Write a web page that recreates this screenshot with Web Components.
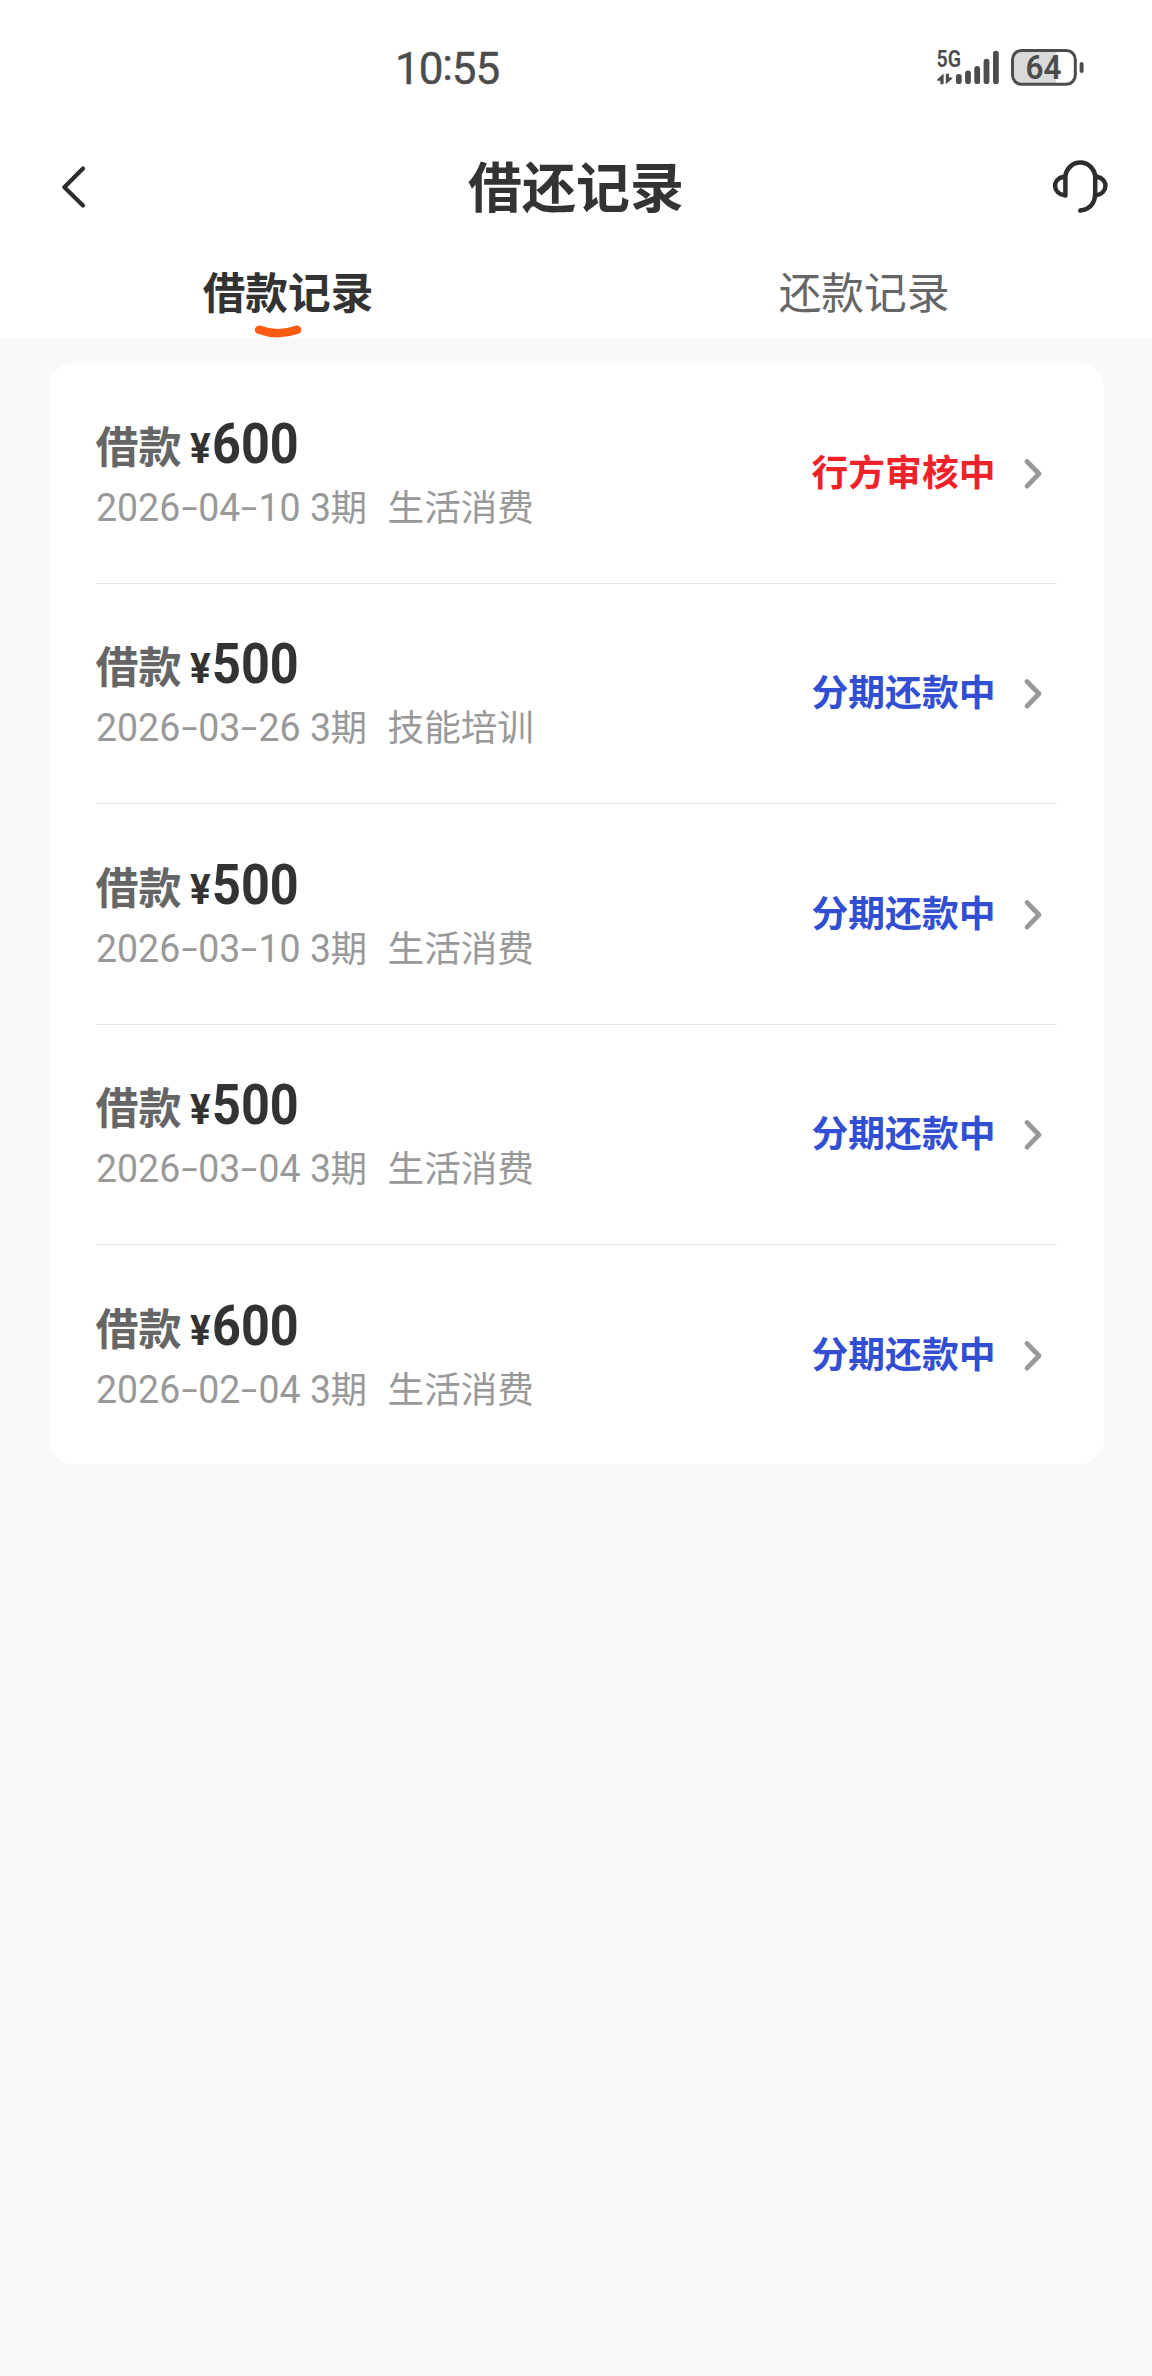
<!DOCTYPE html>
<html lang="zh-CN">
<head>
<meta charset="utf-8">
<title>借还记录</title>
<style>
html,body{margin:0;padding:0}
body{background:#f9f9f9;min-height:2376px;font-family:Roboto,"Noto Sans CJK SC",sans-serif;color:#333}
</style>
</head>
<body>
<loan-page></loan-page>
<script>
function define(name, html) {
  customElements.define(name, class extends HTMLElement {
    constructor() {
      super();
      this.attachShadow({ mode: 'open' }).innerHTML = html;
    }
  });
}

define('status-bar', `
<style>
:host{display:flex;height:130px;box-sizing:border-box;padding:0 66px 0 395px;justify-content:space-between;align-items:flex-start;color:#4c4c4c}
.time{font:400 44px/52px Roboto,sans-serif;padding-top:43px;-webkit-text-stroke:.4px #4c4c4c;letter-spacing:-1.1px}
.time span{vertical-align:4px;line-height:1px}
svg{display:block;margin-top:44px}
text{font-family:Roboto,sans-serif;fill:#4c4c4c}
</style>
<div class="time">10<span>:</span>55</div>
<svg width="151" height="46" viewBox="935 44 151 46">
  <text x="936.5" y="67.3" font-size="23" font-weight="600" textLength="24.5" lengthAdjust="spacingAndGlyphs">5G</text>
  <path d="M943.6 84.3V73.6L937.2 79.6V80.8H940.4V84.3ZM945.8 73.8V84.3L952.4 78.4V77.4H949V73.8Z" fill="#4c4c4c"/>
  <g stroke="#4c4c4c" stroke-width="5.8" stroke-linecap="round"><path d="M958.8 77V81.2M968 73.5V81.2M977.2 69V81.2M986.5 61.7V81.2M995.9 53.6V81.2"/></g>
  <path d="M1020 51H1056V84H1020Q1012.5 84 1012.5 75V60Q1012.5 51 1020 51Z" fill="#d9d9d9"/>
  <rect x="1012.5" y="50.5" width="62.8" height="33.8" rx="9" fill="none" stroke="#4c4c4c" stroke-width="3"/>
  <rect x="1079.6" y="62" width="4" height="11" rx="2" fill="#4c4c4c"/>
  <text x="1025.5" y="79.2" font-size="33" font-weight="600" textLength="36" lengthAdjust="spacingAndGlyphs">64</text>
</svg>`);

define('nav-bar', `
<style>
:host{display:grid;grid-template-columns:1fr auto 1fr;height:106px;align-items:center;padding:0 40px 0 60px}
svg{display:block;fill:none;stroke:#2d2d2d;stroke-linecap:round;stroke-linejoin:round}
.back{margin-top:8px}
.help{justify-self:end;margin-top:1px}
.t{font:700 54px/70px "Noto Sans CJK SC",sans-serif;color:#333;position:relative;left:-10px;padding-top:3px}
</style>
<svg class="back" width="30" height="46" viewBox="60 164 30 46" stroke-width="4.2"><path d="M83 168.6L64.3 187.2L83 205.5"/></svg>
<div class="t"><slot></slot></div>
<svg class="help" width="60" height="56" viewBox="1052 156 60 56" style="overflow:visible" stroke-width="4.5"><path d="M1065.4 195.6V176.2A15 15.4 0 0 1 1095.2 176.2V194Q1094.6 208.5 1080.3 210.6M1063.5 176.7C1052 179 1052 193.7 1065.4 195.6M1097 176.7C1108.5 179 1108.5 193.7 1095.2 195.6"/></svg>`);

define('record-tab', `
<style>
:host{flex:1;display:flex;flex-direction:column;align-items:center;padding-top:24px;font:400 42.7px/60px "Noto Sans CJK SC",sans-serif;color:#666}
:host([active]){font-weight:700;color:#333}
svg{display:none;margin:3px 20px 0 0}
:host([active]) svg{display:block}
</style>
<slot></slot>
<svg width="48" height="15" viewBox="254 323 48 15"><path d="M259.2 329.8Q278 336.6 297 329.8" fill="none" stroke="#fc5a10" stroke-width="8.6" stroke-linecap="round"/></svg>`);

define('tab-bar', `
<style>:host{display:flex;height:102px}</style><slot></slot>`);

define('loan-record', `
<style>
:host{display:flex;justify-content:space-between;height:220.6px;box-sizing:border-box;margin:0 47px;border-bottom:1px solid #e9e9e9;--s:#324fd4}
:host([pending]){--s:#ee2228}
:host(:last-child){border-bottom:0}
.info{padding-top:50.5px}
.line{display:flex;align-items:baseline;white-space:nowrap}
.one{font:700 43px/60px "Noto Sans CJK SC",sans-serif;color:#666}
.label{width:94.5px}
.yen,.amt{font-family:Roboto,sans-serif;color:#333;transform-origin:0 50%}
.yen{font-size:43px;width:22px;transform:scaleX(.9)}
.amt{font-size:56px;transform:scaleX(.9)}
.two{margin-top:4px;font:400 36.6px/48px "Noto Sans CJK SC",sans-serif;color:#999}
.date{font-family:Roboto,sans-serif;font-size:39px;width:235px;transform:scaleX(.96);transform-origin:0 50%}
.use{margin-left:20.5px}
.state{display:flex;height:48px;padding:82.5px 14px 0 0;font:700 36.8px/48px "Noto Sans CJK SC",sans-serif;color:var(--s)}
svg{display:block;margin:11px 0 0 27px}
</style>
<div class="info">
  <div class="line one"><span class="label">借款</span><span class="yen">¥</span><span class="amt"><slot name="amount"></slot></span></div>
  <div class="line two"><span class="date"><slot name="date"></slot></span><span>期</span><span class="use"><slot name="use"></slot></span></div>
</div>
<div class="state"><slot name="state"></slot><svg width="20" height="34" viewBox="0 0 20 34" fill="none" stroke="#999" stroke-width="4.8" stroke-linecap="round" stroke-linejoin="round"><path d="M4 4.5L16 16.8L4 29.1"/></svg></div>`);

define('record-list', `
<style>:host{display:block;margin:25px 48.5px 0;background:#fff;border-radius:24px;overflow:hidden;height:1101px}</style><slot></slot>`);

const records = [
  ['600', '2026-04-10 3', '生活消费', '行方审核中', true],
  ['500', '2026-03-26 3', '技能培训', '分期还款中'],
  ['500', '2026-03-10 3', '生活消费', '分期还款中'],
  ['500', '2026-03-04 3', '生活消费', '分期还款中'],
  ['600', '2026-02-04 3', '生活消费', '分期还款中']
];

define('loan-page', `
<style>:host{display:block}header{background:#fff}i{display:inline-block;width:18.9px;text-align:center;font-style:normal;transform:translateY(-.5px) scale(1.55,.95)}</style>
<header>
  <status-bar></status-bar>
  <nav-bar>借还记录</nav-bar>
  <tab-bar><record-tab active>借款记录</record-tab><record-tab>还款记录</record-tab></tab-bar>
</header>
<record-list>${records.map(([amount, date, use, state, pending]) => `<loan-record${pending ? ' pending' : ''}><span slot="amount">${amount}</span><span slot="date">${date.replaceAll('-', '<i>-</i>')}</span><span slot="use">${use}</span><span slot="state">${state}</span></loan-record>`).join('')}</record-list>`);
</script>
</body>
</html>
